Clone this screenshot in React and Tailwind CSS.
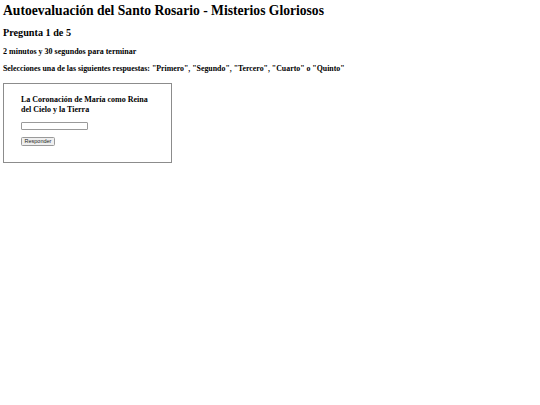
export default function App() {
  return (
    <div className="min-h-[405px] w-[540px] bg-white text-black" style={{ fontFamily: '"Liberation Serif", "Times New Roman", serif' }}>
      <div className="pl-[3px] pt-[2px]">
        <h1 className="text-[13.6px] font-bold leading-[17px]">Autoevaluación del Santo Rosario - Misterios Gloriosos</h1>
        <h2 className="mt-[7.5px] text-[10.2px] font-bold leading-[12px]">Pregunta 1 de 5</h2>
        <h4 className="mt-[8.5px] text-[8px] font-bold leading-[10px]">2 minutos y 30 segundos para terminar</h4>
        <h4 className="mt-[7px] text-[7.85px] font-bold leading-[10px]">Selecciones una de las siguientes respuestas: "Primero", "Segundo", "Tercero", "Cuarto" o "Quinto"</h4>
        <div className="mt-[9px] flex h-[80px] w-[169px] flex-col items-start border border-[#8c8c8c] pl-[17px] pr-[17px] pt-[11px]">
          <h4 className="w-[134px] text-[8px] font-bold leading-[10px]">La Coronación de María como Reina del Cielo y la Tierra</h4>
          <input
            type="text"
            className="mt-[7px] h-[8px] w-[67px] rounded-[1px] border border-[#9a9a9a] bg-white"
          />
          <button
            className="mt-[7px] flex h-[9px] w-[34px] items-center justify-center rounded-[1.5px] border border-[#9a9a9a] bg-[#efefef] text-[5.5px] leading-none text-[#222]"
            style={{ fontFamily: '"Liberation Sans", Arial, sans-serif' }}
          >
            Responder
          </button>
        </div>
      </div>
    </div>
  );
}
